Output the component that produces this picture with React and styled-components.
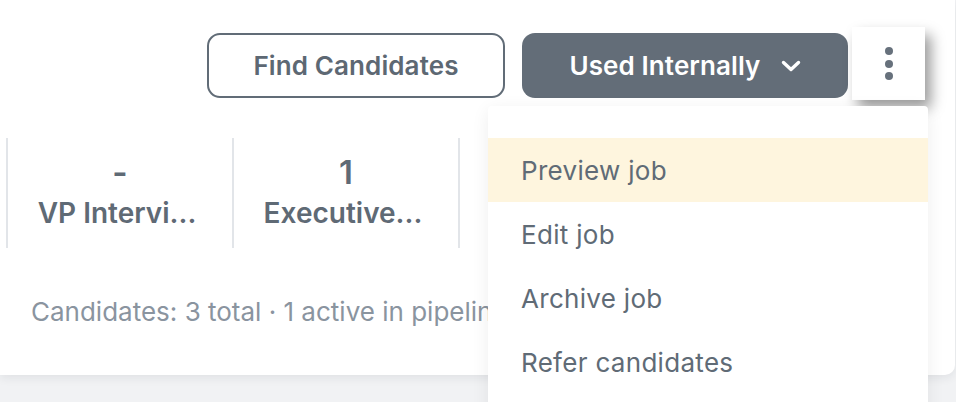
import React from "react";
import styled, { createGlobalStyle } from "styled-components";

const Global = createGlobalStyle`
  html, body { margin: 0; padding: 0; }
  body {
    background: #f1f2f4;
    font-family: Inter, "Noto Sans", sans-serif;
    overflow: hidden;
    width: 956px;
    height: 402px;
  }
`;

const Card = styled.div`
  position: relative;
  width: 955px;
  height: 375px;
  background: #ffffff;
  border-radius: 0 0 10px 0;
  box-shadow: 0 3px 10px rgba(30, 40, 50, 0.08);
  box-sizing: border-box;
`;

const Header = styled.div`
  display: flex;
  justify-content: flex-end;
  align-items: flex-start;
  padding: 27px 30px 0 0;
`;

const OutlineButton = styled.button`
  margin-top: 6px;
  width: 298px;
  height: 65px;
  box-sizing: border-box;
  border: 2px solid #616c77;
  border-radius: 13px;
  background: #fff;
  color: #5d6873;
  font-family: Inter, sans-serif;
  font-size: 26px;
  font-weight: 600;
  letter-spacing: 0.1px;
  display: flex;
  align-items: center;
  justify-content: center;
  padding: 0;
`;

const SolidButton = styled.button`
  margin-top: 6px;
  margin-left: 17px;
  width: 326px;
  height: 65px;
  border: none;
  border-radius: 13px;
  background: #636d78;
  color: #ffffff;
  font-family: Inter, sans-serif;
  font-size: 26px;
  font-weight: 600;
  letter-spacing: 0.1px;
  display: flex;
  align-items: center;
  justify-content: center;
  gap: 20px;
  padding: 0;
`;

const KebabWrap = styled.div`
  position: relative;
  margin-left: 4px;
`;

const KebabButton = styled.button`
  width: 73px;
  height: 73px;
  border: none;
  background: #ffffff;
  box-shadow: 6px 8px 13px rgba(0, 0, 0, 0.4);
  display: flex;
  flex-direction: column;
  align-items: center;
  justify-content: center;
  gap: 4.5px;
  padding: 0;
`;

const Dot = styled.span`
  width: 8px;
  height: 8px;
  border-radius: 50%;
  background: #67717c;
`;

const Menu = styled.ul`
  position: absolute;
  top: calc(100% + 6px);
  right: -3px;
  width: 440px;
  margin: 0;
  padding: 32px 0 32px;
  list-style: none;
  background: #ffffff;
  box-shadow: 0 4px 18px rgba(0, 0, 0, 0.07);
  border-radius: 4px 4px 0 0;
  z-index: 5;
`;

const MenuItem = styled.li`
  height: 64px;
  display: flex;
  align-items: center;
  padding-left: 33px;
  font-size: 26px;
  font-weight: 400;
  letter-spacing: 0.3px;
  color: #606b76;
  background: ${(p) => (p.$active ? "#fef5de" : "transparent")};
`;

const Stats = styled.div`
  display: flex;
  margin-top: 38px;
  padding-left: 6px;
`;

const Stat = styled.div`
  width: 226px;
  height: 110px;
  box-sizing: border-box;
  border-left: 2px solid #e2e5e9;
  padding-top: 14px;
  display: flex;
  flex-direction: column;
  align-items: center;
`;

const StatValue = styled.div`
  font-size: 33px;
  font-weight: 600;
  line-height: 40px;
  color: #5f6a75;
`;

const StatLabel = styled.div`
  font-size: 28px;
  font-weight: 600;
  line-height: 42px;
  color: #5f6a75;
  white-space: nowrap;
  margin-right: 6px;
`;

const Summary = styled.div`
  margin-top: 46px;
  padding-left: 31px;
  font-size: 26px;
  line-height: 36px;
  color: #8a949f;
  white-space: nowrap;
`;

const Chevron = () => (
  <svg width="20" height="12" viewBox="0 0 20 12" fill="none">
    <path
      d="M2.5 2.5 L10 9.5 L17.5 2.5"
      stroke="#ffffff"
      strokeWidth="3.4"
      strokeLinecap="round"
      strokeLinejoin="round"
    />
  </svg>
);

export default function App() {
  return (
    <>
      <Global />
      <Card>
        <Header>
          <OutlineButton>Find Candidates</OutlineButton>
          <SolidButton>
            Used Internally
            <Chevron />
          </SolidButton>
          <KebabWrap>
            <KebabButton aria-label="More actions">
              <Dot />
              <Dot />
              <Dot />
            </KebabButton>
            <Menu>
              <MenuItem $active>Preview job</MenuItem>
              <MenuItem>Edit job</MenuItem>
              <MenuItem>Archive job</MenuItem>
              <MenuItem>Refer candidates</MenuItem>
            </Menu>
          </KebabWrap>
        </Header>
        <Stats>
          <Stat>
            <StatValue>-</StatValue>
            <StatLabel>VP Intervi...</StatLabel>
          </Stat>
          <Stat>
            <StatValue>1</StatValue>
            <StatLabel>Executive...</StatLabel>
          </Stat>
          <Stat />
        </Stats>
        <Summary>Candidates: 3 total · 1 active in pipelin</Summary>
      </Card>
    </>
  );
}
